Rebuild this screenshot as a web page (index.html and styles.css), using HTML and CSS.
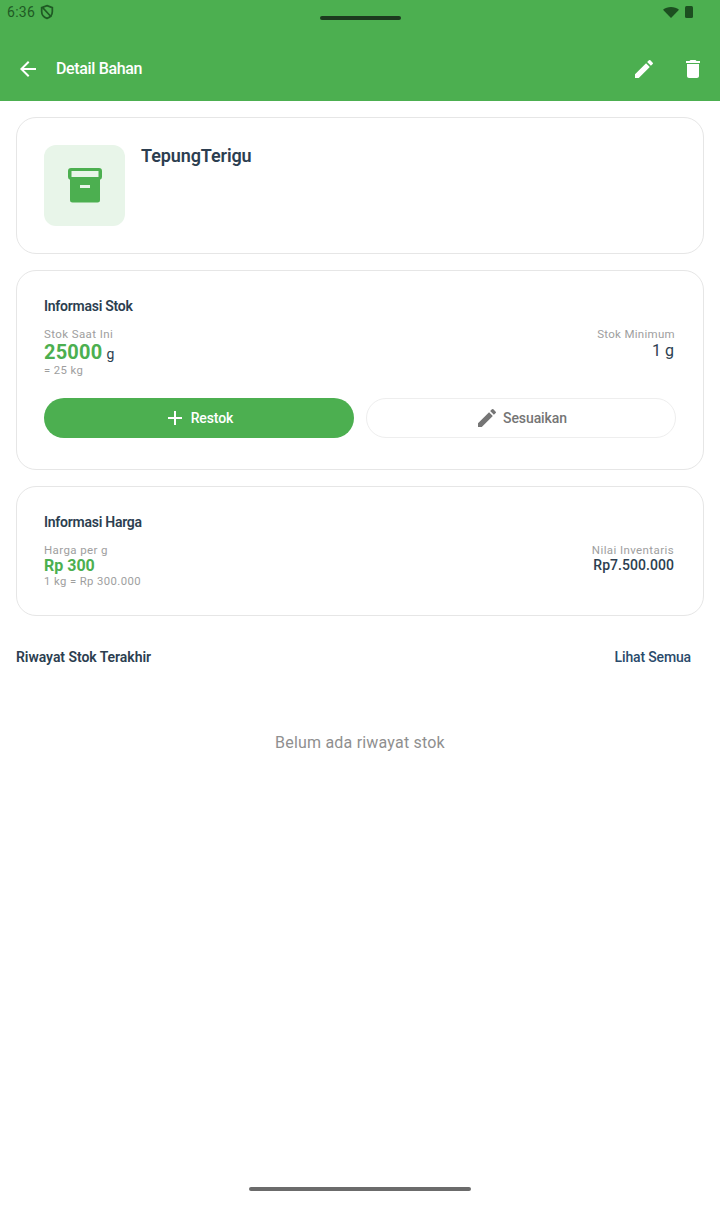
FILE: index.html
```html
<!DOCTYPE html>
<html lang="id">
<head>
<meta charset="utf-8">
<title>Detail Bahan</title>
<link rel="stylesheet" href="styles.css">
</head>
<body>
<div class="screen">
  <header class="appbar">
    <div class="status">
      <div class="status-left">
        <span class="clock">6:36</span>
        <svg class="shield" viewBox="0 0 24 24" width="16" height="16"><path d="M12 2.500l8 3v5.700c0 4.900-3.300 8.600-8 10.300-4.700-1.700-8-5.400-8-10.300V5.500z" fill="none" stroke="#1f5a24" stroke-width="2.600"/><path d="M5.500 5.500l13 14" stroke="#1f5a24" stroke-width="2.400"/></svg>
      </div>
      <div class="pill"></div>
      <div class="status-right">
        <svg viewBox="0 0 16 12" width="16" height="12"><path d="M0 3.800C4.300 0 11.700 0 16 3.800L8 12z" fill="#1c4f20"/></svg>
        <span class="battery"></span>
      </div>
    </div>
    <div class="toolbar">
      <div class="toolbar-left">
        <svg viewBox="0 0 24 24" width="24" height="24"><path d="M20 11H7.830l5.590-5.590L12 4l-8 8 8 8 1.410-1.410L7.830 13H20z" fill="#fff"/></svg>
        <h1 class="toolbar-title">Detail Bahan</h1>
      </div>
      <div class="toolbar-actions">
        <svg viewBox="0 0 24 24" width="24" height="24"><path d="M3 17.250V21h3.750L17.810 9.940l-3.750-3.750L3 17.250zM20.710 7.040a1 1 0 0 0 0-1.410l-2.340-2.340a1 1 0 0 0-1.410 0l-1.830 1.830 3.750 3.750 1.830-1.830z" fill="#fff"/></svg>
        <svg viewBox="0 0 24 24" width="24" height="24"><path d="M6 19c0 1.100.9 2 2 2h8c1.100 0 2-.9 2-2V7H6v12zM19 4h-3.500l-1-1h-5l-1 1H5v2h14V4z" fill="#fff"/></svg>
      </div>
    </div>
  </header>

  <main class="content">
    <section class="card card-head">
      <div class="thumb">
        <svg viewBox="0 0 34 35" width="34" height="35"><path fill-rule="evenodd" fill="#4caf50" d="M3 0h28a3 3 0 0 1 3 3v6a3 3 0 0 1-2 2.800V32a2.500 2.500 0 0 1-2.500 2.500h-25A2.500 2.500 0 0 1 2 32V11.800A3 3 0 0 1 0 9V3a3 3 0 0 1 3-3zM3.500 3v6h27V3zM12 17v3h10v-3z"/></svg>
      </div>
      <h2 class="name">TepungTerigu</h2>
    </section>

    <section class="card card-stock">
      <h3 class="card-title">Informasi Stok</h3>
      <div class="split stock-split">
        <div class="col">
          <span class="label">Stok Saat Ini</span>
          <div class="qty"><span class="qty-num">25000</span><span class="qty-unit">g</span></div>
          <span class="note">= 25 kg</span>
        </div>
        <div class="col col-right">
          <span class="label label-end">Stok Minimum</span>
          <span class="min">1 g</span>
        </div>
      </div>
      <div class="actions">
        <button class="btn btn-fill">
          <svg viewBox="0 0 24 24" width="24" height="24"><path d="M19 13h-6v6h-2v-6H5v-2h6V5h2v6h6z" fill="#fff"/></svg>
          Restok
        </button>
        <button class="btn btn-line">
          <svg viewBox="0 0 24 24" width="24" height="24"><path d="M3 17.250V21h3.750L17.810 9.940l-3.750-3.750L3 17.250zM20.710 7.040a1 1 0 0 0 0-1.410l-2.340-2.340a1 1 0 0 0-1.410 0l-1.830 1.830 3.750 3.750 1.830-1.830z" fill="#757575"/></svg>
          Sesuaikan
        </button>
      </div>
    </section>

    <section class="card card-price">
      <h3 class="card-title">Informasi Harga</h3>
      <div class="split price-split">
        <div class="col">
          <span class="label">Harga per g</span>
          <span class="price">Rp 300</span>
          <span class="note">1 kg = Rp 300.000</span>
        </div>
        <div class="col col-right">
          <span class="label">Nilai Inventaris</span>
          <span class="worth">Rp7.500.000</span>
        </div>
      </div>
    </section>

    <div class="history-head">
      <h3 class="history-title">Riwayat Stok Terakhir</h3>
      <span class="history-link">Lihat Semua</span>
    </div>
    <p class="empty">Belum ada riwayat stok</p>
  </main>

  <div class="home-wrap"><div class="home"></div></div>
</div>
</body>
</html>
```
FILE: styles.css
```css
* { box-sizing: border-box; }
html, body { margin: 0; padding: 0; }
body { background: #fff; font-family: Roboto, "Noto Sans", sans-serif; color: #2c3e50; }
h1, h2, h3, p { margin: 0; }
.screen { width: 720px; height: 1206px; display: flex; flex-direction: column; background: #fff; }

.appbar { height: 101px; background: #4caf50; flex: none; }
.status { height: 36px; display: flex; justify-content: space-between; padding: 0 27px 0 7px; position: relative; }
.status-left { display: flex; align-items: center; gap: 4px; height: 24px; }
.clock { font-size: 14px; color: #1f5a24; letter-spacing: 0.3px; }
.shield { display: block; }
.pill { position: absolute; left: 320px; top: 16px; width: 81px; height: 4px; border-radius: 2px; background: #1c3a1e; }
.status-right { display: flex; align-items: center; gap: 6px; height: 24px; }
.battery { width: 8px; height: 12px; background: #1c4f20; border-radius: 1.500px; }
.toolbar { height: 65px; display: flex; justify-content: space-between; align-items: center; padding: 0 15px 0 16px; }
.toolbar-left { display: flex; align-items: center; gap: 16px; }
.toolbar-title { font-size: 16px; font-weight: 500; color: #fff; letter-spacing: -0.35px; }
.toolbar-actions { display: flex; gap: 25px; }
.toolbar-actions svg { display: block; }

.content { flex: 1; padding: 16px; display: flex; flex-direction: column; }
.card { border: 1.500px solid #e6e6e6; border-radius: 20px; background: #fff; padding: 0 27px; margin-bottom: 16px; }
.card-head { height: 137px; display: flex; gap: 16px; padding-top: 27px; }
.thumb { width: 81px; height: 81px; border-radius: 12px; background: #e8f5e9; display: flex; align-items: center; justify-content: center; flex: none; }
.name { font-size: 18px; font-weight: 600; line-height: 22px; color: #2c3e50; letter-spacing: -0.1px; }

.card-stock { height: 200px; padding-top: 27px; }
.card-price { height: 130px; padding-top: 27px; }
.card-title { font-size: 14px; font-weight: 600; line-height: 17px; color: #2c3e50; letter-spacing: -0.25px; }
.split { display: flex; justify-content: space-between; padding-right: 2px; }
.stock-split { margin-top: 12px; height: 51px; }
.price-split { margin-top: 12px; }
.col { display: flex; flex-direction: column; align-items: flex-start; }
.col-right { align-items: flex-end; }
.label { font-size: 11.500px; line-height: 14px; color: #9e9e9e; letter-spacing: 0.4px; }
.label-end { margin-right: -1px; letter-spacing: 0.3px; }
.qty { display: flex; align-items: baseline; gap: 4px; height: 23px; line-height: 23px; }
.qty-num { font-size: 20px; font-weight: 700; color: #4caf50; letter-spacing: 0.2px; }
.qty-unit { font-size: 14px; color: #2c3e50; }
.note { font-size: 11.300px; line-height: 13px; color: #9e9e9e; letter-spacing: 0.4px; }
.min { font-size: 16px; line-height: 19px; color: #2c3e50; letter-spacing: 0; }
.price { font-size: 16px; font-weight: 700; line-height: 18px; color: #4caf50; }
.worth { font-size: 14px; font-weight: 500; line-height: 16px; color: #2c3e50; letter-spacing: 0.05px; }

.actions { display: grid; grid-template-columns: 1fr 1fr; gap: 12px; margin-top: 20px; }
.btn { height: 40px; border-radius: 20px; font-family: inherit; font-size: 14px; font-weight: 500; display: flex; align-items: center; justify-content: center; gap: 4px; padding: 0; letter-spacing: -0.1px; }
.btn-fill { background: #4caf50; border: 0; color: #fff; padding-right: 2px; }
.btn-line { background: #fff; border: 1.500px solid #eeeeee; color: #757575; }

.history-head { display: flex; justify-content: space-between; align-items: center; margin-top: 16px; padding-right: 13px; height: 17px; }
.history-title { font-size: 14px; font-weight: 600; color: #2c3e50; letter-spacing: -0.05px; }
.history-link { font-size: 14px; font-weight: 500; color: #2a4a6b; letter-spacing: -0.15px; }
.empty { margin-top: 68px; text-align: center; font-size: 16px; line-height: 19px; color: #8f8f8f; letter-spacing: 0.2px; }

.home-wrap { height: 34px; flex: none; display: flex; justify-content: center; }
.home { width: 222px; height: 4px; border-radius: 2px; background: #6b6b6b; margin-top: 15px; }
```
